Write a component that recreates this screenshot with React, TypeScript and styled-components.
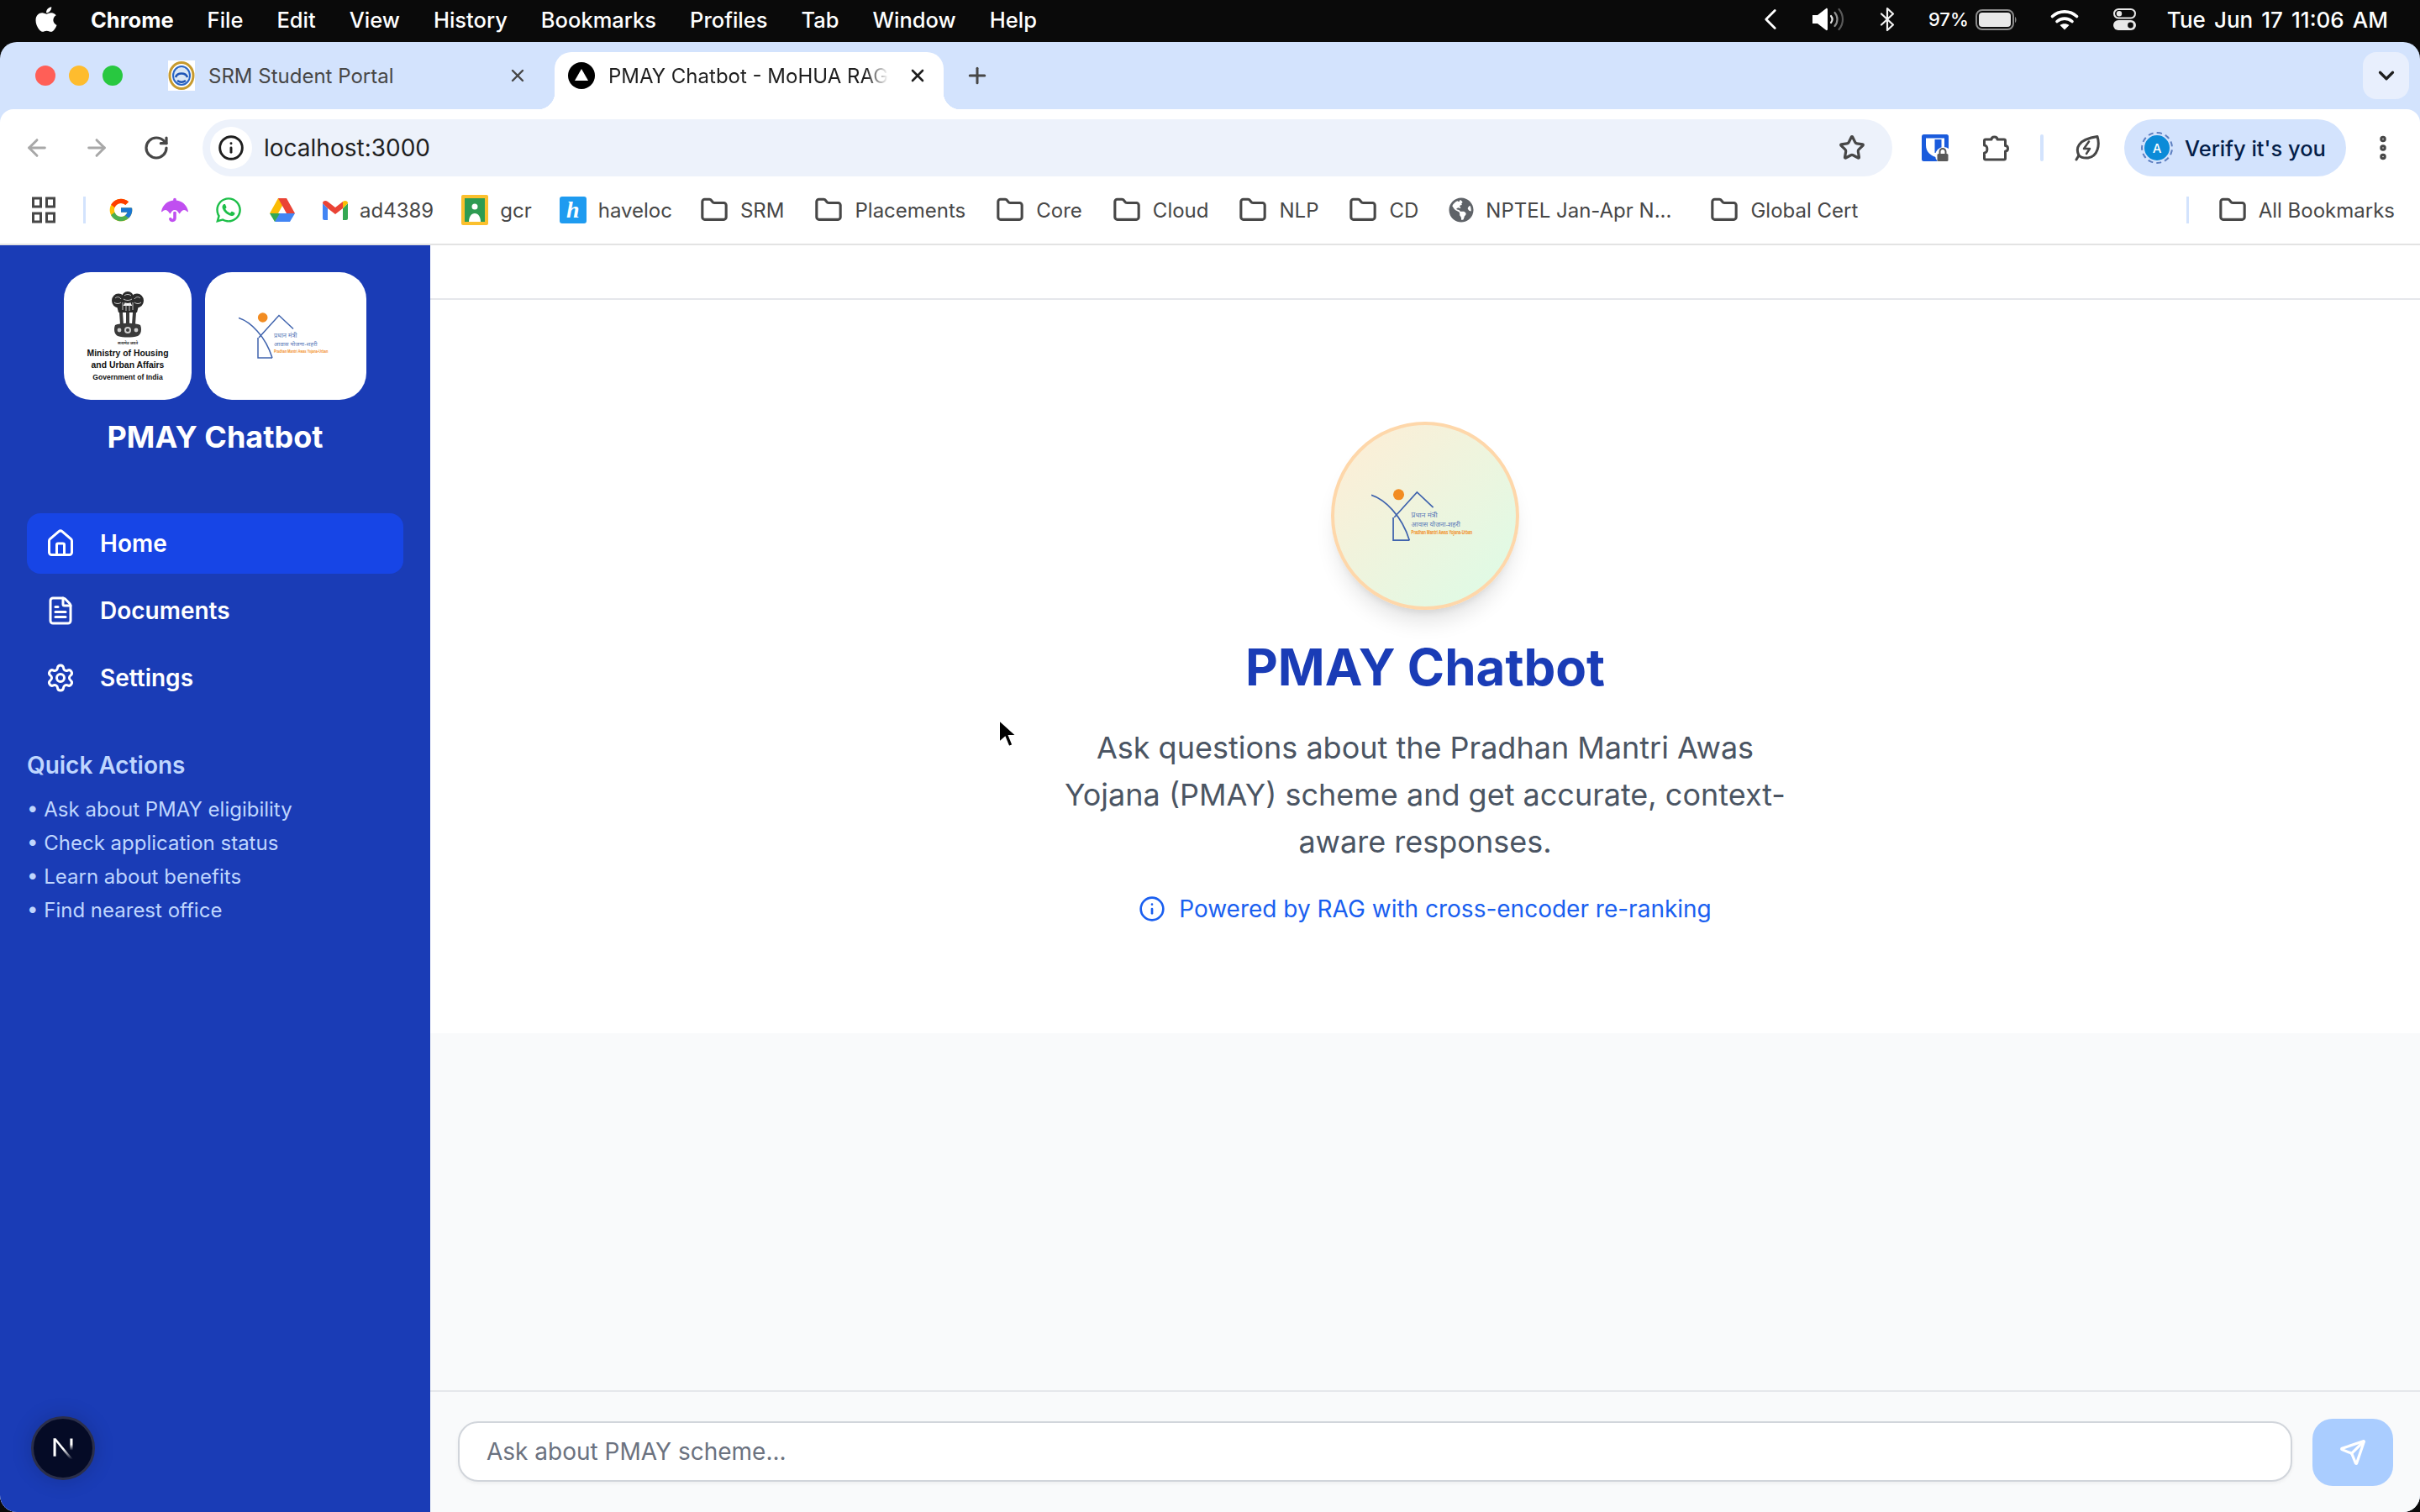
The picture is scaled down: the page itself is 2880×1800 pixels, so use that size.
import React from "react";
import styled, { createGlobalStyle } from "styled-components";
import {
  ArrowLeft,
  ArrowRight,
  ChevronDown,
  ChevronLeft,
  FileText,
  Folder,
  House,
  Info,
  MoreVertical,
  Plus,
  RotateCw,
  Send,
  Settings,
  Star,
  X,
} from "lucide-react";
import { FaApple, FaGlobeAmericas, FaUmbrella, FaWhatsapp } from "react-icons/fa";
import { FcGoogle } from "react-icons/fc";

const GlobalStyle = createGlobalStyle`
  html, body {
    margin: 0;
    padding: 0;
    overflow: hidden;
    background: #0a0a0a;
  }
  * {
    box-sizing: border-box;
  }
`;

const FONT = `Inter, "Noto Sans", "Liberation Sans", sans-serif`;

const Screen = styled.div`
  width: 2880px;
  height: 1800px;
  position: relative;
  display: flex;
  flex-direction: column;
  overflow: hidden;
  background: #0a0a0a;
  font-family: ${FONT};
`;

/* mac menu bar */
const MenuBar = styled.div`
  height: 50px;
  flex: none;
  display: flex;
  align-items: center;
  padding: 0 38px 4px 38px;
  color: #fff;
  font-size: 25.5px;
`;

const MenuItems = styled.div`
  display: flex;
  align-items: center;
  gap: 40px;
  margin-left: 36px;
`;

const MenuItem = styled.span<{ $bold?: boolean }>`
  font-weight: ${({ $bold }) => ($bold ? 700 : 500)};
`;

const StatusArea = styled.div`
  margin-left: auto;
  display: flex;
  align-items: center;
`;

const StatusSlot = styled.div<{ $w: number }>`
  width: ${({ $w }) => $w}px;
  display: flex;
  justify-content: center;
  align-items: center;
`;

const BatteryText = styled.span`
  font-size: 22px;
  font-weight: 500;
  margin-right: 8px;
`;

const Clock = styled.span`
  font-size: 26px;
  font-weight: 500;
  margin-left: 15px;
  word-spacing: 3.2px;
`;

/* browser window */
const BrowserWindow = styled.div`
  flex: 1;
  min-height: 0;
  display: flex;
  flex-direction: column;
  background: #d3e3fd;
  border-radius: 20px;
  overflow: hidden;
`;

const TabStrip = styled.div`
  height: 80px;
  flex: none;
  display: flex;
  align-items: flex-end;
  padding: 12px 13px 0 42px;
`;

const TrafficLights = styled.div`
  display: flex;
  gap: 16px;
  align-self: center;
  width: 142px;
  transform: translateY(-6px);
`;

const Light = styled.span<{ $color: string }>`
  width: 24px;
  height: 24px;
  border-radius: 50%;
  background: ${({ $color }) => $color};
`;

const Tab = styled.div<{ $active?: boolean }>`
  position: relative;
  width: ${({ $active }) => ($active ? "463px" : "476px")};
  height: 68px;
  display: flex;
  align-items: center;
  padding: 0 ${({ $active }) => ($active ? "19px" : "32px")} 12px 16px;
  gap: 16px;
  border-radius: 20px 20px 0 0;
  background: ${({ $active }) => ($active ? "#fff" : "transparent")};
  color: ${({ $active }) => ($active ? "#1f1f1f" : "#474747")};
  font-size: 24px;

  ${({ $active }) =>
    $active &&
    `
    &::before, &::after {
      content: "";
      position: absolute;
      bottom: 0;
      width: 20px;
      height: 20px;
    }
    &::before {
      left: -20px;
      background: radial-gradient(circle at 0 0, transparent 20px, #fff 20.5px);
    }
    &::after {
      right: -20px;
      background: radial-gradient(circle at 100% 0, transparent 20px, #fff 20.5px);
    }
  `}
`;

const TabTitle = styled.span<{ $fade?: boolean }>`
  flex: 1;
  white-space: nowrap;
  ${({ $fade }) =>
    $fade &&
    `-webkit-mask-image: linear-gradient(90deg, #000 90%, transparent 98%);
     mask-image: linear-gradient(90deg, #000 90%, transparent 98%);`}
`;

const NewTabButton = styled.div`
  width: 40px;
  height: 56px;
  margin-left: 20px;
  margin-bottom: 12px;
  display: flex;
  align-items: center;
  justify-content: center;
  color: #474747;
`;

const TabListButton = styled.div`
  margin-left: auto;
  width: 55px;
  height: 56px;
  margin-bottom: 12px;
  border-radius: 16px;
  background: #e8effd;
  display: flex;
  align-items: center;
  justify-content: center;
  color: #1f1f1f;
`;

const Toolbar = styled.div`
  height: 80px;
  flex: none;
  background: #fff;
  border-radius: 16px 16px 0 0;
  display: flex;
  align-items: center;
  padding: 12px 26px 0 28px;
`;

const NavIcons = styled.div`
  width: 213px;
  display: flex;
  align-items: center;
  gap: 39px;
`;

const Omnibox = styled.div`
  flex: 1;
  height: 68px;
  border-radius: 34px;
  background: #edf2fb;
  display: flex;
  align-items: center;
  padding: 0 32px 0 9px;
  color: #1f1f1f;
  font-size: 28px;
`;

const SiteInfo = styled.div`
  width: 50px;
  height: 50px;
  border-radius: 50%;
  background: #fff;
  display: flex;
  align-items: center;
  justify-content: center;
  margin-right: 14px;
  color: #1f1f1f;
`;

const OmniSpacer = styled.div`
  flex: 1;
`;

const ToolIcons = styled.div`
  display: flex;
  align-items: center;
  margin-left: 35px;
  gap: 40px;
  color: #474747;
`;

const ToolbarSeparator = styled.div`
  width: 4px;
  height: 32px;
  border-radius: 2px;
  background: #d3e3fd;
  margin: 0 -3px 0 -3px;
`;

const VerifyChip = styled.div`
  width: 264px;
  height: 68px;
  margin-left: 29px;
  border-radius: 34px;
  background: #d3e3fd;
  display: flex;
  align-items: center;
  padding-left: 20px;
  gap: 14px;
  color: #041e49;
  font-size: 25.5px;
  font-weight: 500;
`;

const Avatar = styled.div`
  width: 38px;
  height: 38px;
  border-radius: 50%;
  border: 2px dashed #5d7fc0;
  display: flex;
  align-items: center;
  justify-content: center;
  flex: none;
`;

const AvatarInner = styled.div`
  width: 30px;
  height: 30px;
  border-radius: 50%;
  background: #0b8bd8;
  color: #fff;
  font-size: 15px;
  display: flex;
  align-items: center;
  justify-content: center;
`;

const KebabSlot = styled.div`
  margin-left: 26px;
  color: #474747;
  display: flex;
`;

const BookmarksBar = styled.div`
  height: 82px;
  flex: none;
  background: #fff;
  border-bottom: 2px solid #e3e3e3;
  display: flex;
  align-items: center;
  padding: 0 30px 0 38px;
  gap: 33px;
  color: #474747;
  font-size: 24px;
`;

const BookmarkSeparator = styled.div<{ $push?: boolean }>`
  width: 3px;
  height: 32px;
  background: #d3e3fd;
  margin-left: ${({ $push }) => ($push ? "auto" : "0")};
  margin-right: ${({ $push }) => ($push ? "2px" : "-7px")};
`;

const Bookmark = styled.div<{ $offset?: number }>`
  display: flex;
  align-items: center;
  gap: 14px;
  white-space: nowrap;
  margin-left: ${({ $offset }) => $offset ?? 0}px;
`;

const IconRow = styled.div`
  display: flex;
  align-items: center;
  gap: 32px;
`;

const FolderGroup = styled.div`
  display: flex;
  align-items: center;
  gap: 36px;
`;

const IconCell = styled.div`
  width: 32px;
  height: 32px;
  display: flex;
  align-items: center;
  justify-content: center;
`;

const HavelocIcon = styled.div`
  width: 32px;
  height: 32px;
  border-radius: 3px;
  background: #1e9bf0;
  color: #fff;
  font-family: "Liberation Serif", serif;
  font-style: italic;
  font-weight: 700;
  font-size: 28px;
  line-height: 32px;
  text-align: center;
`;

const BookmarkFolder = styled(Folder)`
  width: 34px;
  height: 34px;
  flex: none;
  color: #474747;
`;

/* the app itself */
const AppLayout = styled.div`
  flex: 1;
  min-height: 0;
  display: flex;
  background: #f9fafb;
`;

const Sidebar = styled.aside`
  width: 512px;
  flex: none;
  background: #1a3cb6;
  display: flex;
  flex-direction: column;
  padding: 32px 32px 0;
  color: #fff;
  position: relative;
`;

const LogoRow = styled.div`
  display: flex;
  justify-content: center;
  gap: 16px;
  margin: 0 -8px;
`;

const LogoCard = styled.div<{ $wide?: boolean }>`
  width: ${({ $wide }) => ($wide ? "192px" : "152px")};
  height: 152px;
  border-radius: 32px;
  background: #fff;
  display: flex;
  flex-direction: column;
  align-items: center;
  justify-content: center;
  color: #111;
`;

const MinistryLine = styled.div<{ $small?: boolean }>`
  font-family: "Liberation Sans", Arial, sans-serif;
  font-weight: 700;
  font-size: ${({ $small }) => ($small ? "8.6px" : "10.4px")};
  line-height: ${({ $small }) => ($small ? "15px" : "14px")};
  white-space: nowrap;
`;

const SidebarTitle = styled.h1`
  margin: 22px 0 0;
  text-align: center;
  font-size: 36px;
  line-height: 44px;
  font-weight: 700;
`;

const Nav = styled.nav`
  margin-top: 69px;
  display: flex;
  flex-direction: column;
  gap: 8px;
`;

const NavItem = styled.div<{ $active?: boolean }>`
  height: 72px;
  border-radius: 16px;
  display: flex;
  align-items: center;
  gap: 29px;
  padding-left: 22px;
  font-size: 28px;
  font-weight: 600;
  background: ${({ $active }) => ($active ? "#1745e6" : "transparent")};
`;

const QuickActions = styled.section`
  margin-top: 50px;
  color: #bfd6fe;
`;

const QuickTitle = styled.h3`
  margin: 0 0 15px;
  font-size: 28px;
  line-height: 36px;
  font-weight: 600;
`;

const QuickItem = styled.div`
  font-size: 24px;
  line-height: 40px;
`;

const NextBadge = styled.div`
  position: absolute;
  left: 37px;
  bottom: 38px;
  width: 76px;
  height: 76px;
  border-radius: 50%;
  background: #050b26;
  border: 3px solid #2b2f4a;
  box-shadow: 0 0 24px rgba(0, 0, 0, 0.18);
  display: flex;
  align-items: center;
  justify-content: center;
`;

const Main = styled.main`
  flex: 1;
  min-width: 0;
  display: flex;
  flex-direction: column;
`;

const TopBar = styled.div`
  height: 65px;
  flex: none;
  background: #fff;
  border-bottom: 2px solid #e5e7eb;
`;

const Messages = styled.div`
  flex: 1;
  min-height: 0;
`;

const Hero = styled.section`
  height: 873px;
  background: #fff;
  padding-top: 145px;
  display: flex;
  flex-direction: column;
  align-items: center;
`;

const HeroCircle = styled.div`
  width: 224px;
  height: 224px;
  border-radius: 50%;
  border: 4px solid #fed7aa;
  background: linear-gradient(135deg, #ffedd5, #dcfce7);
  box-shadow: 0 20px 25px -5px rgba(0, 0, 0, 0.1), 0 8px 10px -6px rgba(0, 0, 0, 0.1);
  display: flex;
  align-items: center;
  justify-content: center;
`;

const HeroTitle = styled.h2`
  margin: 32px 0 0;
  font-size: 60px;
  line-height: 72px;
  font-weight: 700;
  color: #1a3cb6;
`;

const HeroText = styled.p`
  margin: 32px 0 0;
  width: 896px;
  text-align: center;
  font-size: 36px;
  line-height: 56px;
  color: #4b5563;
`;

const PoweredBy = styled.div`
  margin-top: 32px;
  display: flex;
  align-items: center;
  gap: 16px;
  font-size: 28px;
  line-height: 40px;
  color: #1a5ff0;
`;

const Composer = styled.div`
  height: 145px;
  flex: none;
  border-top: 2px solid #e5e7eb;
  padding: 32px 32px 0 33px;
  display: flex;
  align-items: flex-start;
  gap: 24px;
`;

const ComposerInput = styled.input`
  flex: 1;
  height: 72px;
  margin-top: 3px;
  border: 2px solid #d1d5db;
  border-radius: 24px;
  background: #fff;
  box-shadow: 0 2px 4px rgba(0, 0, 0, 0.05);
  padding: 0 32px;
  font-family: ${FONT};
  font-size: 28px;
  color: #111827;
  outline: none;

  &::placeholder {
    color: #6b7280;
    opacity: 1;
  }
`;

const SendButton = styled.button`
  width: 96px;
  height: 80px;
  flex: none;
  border: none;
  border-radius: 24px;
  background: #aacdff;
  color: #fff;
  display: flex;
  align-items: center;
  justify-content: center;
  padding: 0;
`;

const CursorMark = styled.svg`
  position: absolute;
  left: 1186px;
  top: 855px;
`;

const PmayLogo: React.FC<{ width: number }> = ({ width }) => (
  <svg width={width} height={(width * 56) / 113} viewBox="0 0 113 56">
    <circle cx="28.7" cy="6" r="5.8" fill="#f28c22" />
    <g fill="none" stroke="#3f63ad" strokeWidth="1.5">
      <path d="M0 6.5C14 11 32 28 40 54" />
      <path d="M24 30L48 3.5L65 19.5" />
      <path d="M23 30V54H40" />
    </g>
    <text x="42" y="30" fontSize="7.5" fill="#5a7ab8" fontFamily="'Noto Sans', 'DejaVu Sans', sans-serif">
      प्रधान मंत्री
    </text>
    <text x="42" y="39.5" fontSize="7" fill="#5a7ab8" fontFamily="'Noto Sans', 'DejaVu Sans', sans-serif">
      आवास योजना-शहरी
    </text>
    <g transform="translate(42 47.5) scale(0.66 1)">
      <text fontSize="5.800" fontWeight="700" fill="#f28c22" fontFamily="'Liberation Sans', sans-serif">
        Pradhan Mantri Awas Yojana-Urban
      </text>
    </g>
  </svg>
);

const StateEmblem: React.FC = () => (
  <svg width="40" height="70" viewBox="0 0 40 70">
    {/* lion heads */}
    <g fill="#2b2b2b">
      <circle cx="20" cy="10" r="7" />
      <ellipse cx="9" cy="14" rx="8" ry="8.500" />
      <ellipse cx="31" cy="14" rx="8" ry="8.500" />
      <path d="M7 20h26l-2 8h-22z" />
    </g>
    <g fill="none" stroke="#dcdcdc" strokeWidth="0.900">
      <path d="M16 8c2-2 6-2 8 0M15 12c3 2 7 2 10 0M5 11c2-2 5-2 7 1M4 16c2 2 6 2 8 0M28 12c2-3 5-3 7-1M28 16c2 2 6 2 8 0" />
      <path d="M14 16v9M18 17v9M22 17v9M26 16v9" />
    </g>
    {/* chest and abacus */}
    <g fill="#3a3a3a">
      <path d="M10 28h4l1 14h-4zM18 28h4v14h-4zM26 28h4l-1 14h-4z" />
      <path d="M5 43c6-3 24-3 30 0 2 5 1 11-3 13-7 2-17 2-24 0-4-2-5-8-3-13z" />
    </g>
    <g fill="#cfcfcf">
      <circle cx="20" cy="49" r="4" />
      <circle cx="10" cy="49" r="2.400" />
      <circle cx="30" cy="49" r="2.400" />
    </g>
    <circle cx="20" cy="49" r="2" fill="#3a3a3a" />
    <text x="20" y="66" fontSize="4.600" fontWeight="700" textAnchor="middle" fill="#333" fontFamily="'Noto Sans', 'DejaVu Sans', sans-serif">
      सत्यमेव जयते
    </text>
  </svg>
);

const GmailIcon: React.FC = () => (
  <svg width="30" height="26" viewBox="0 0 30 26">
    <path d="M0 5v18a2 2 0 0 0 2 2h4V11z" fill="#4285f4" />
    <path d="M30 5v18a2 2 0 0 1-2 2h-4V11z" fill="#34a853" />
    <path d="M0 5l6 6 9 7 9-7V3l-9 7L6 3C3.500 1 0 2 0 5z" fill="#ea4335" />
    <path d="M24 3v8l6-6c0-3-3.500-4-6-2z" fill="#fbbc04" />
  </svg>
);

const DriveIcon: React.FC = () => (
  <svg width="32" height="30" viewBox="0 0 32 30">
    <path d="M11 1h10l-5 9-5 9H1z" fill="#fbbc04" />
    <path d="M21 1l10 18H21L11 1z" fill="#ea4335" />
    <path d="M7 29h18l6-10H12z" fill="#4285f4" />
    <path d="M1 19l6 10 6-10z" fill="#34a853" />
  </svg>
);

const ClassroomIcon: React.FC = () => (
  <svg width="32" height="36" viewBox="0 0 32 36">
    <rect width="32" height="36" rx="2" fill="#fbc02d" />
    <rect x="4" y="4" width="24" height="28" fill="#2e9b52" />
    <circle cx="16" cy="14" r="3.500" fill="#fff" />
    <path d="M9 32c0-6 3-10 7-10s7 4 7 10z" fill="#fff" />
  </svg>
);

const AppsGrid: React.FC = () => (
  <svg width="28" height="32" viewBox="0 0 28 32" fill="none" stroke="#474747" strokeWidth="3">
    <rect x="1.500" y="2" width="9" height="10" />
    <rect x="17.500" y="2" width="9" height="10" />
    <rect x="1.500" y="20" width="9" height="10" />
    <rect x="17.500" y="20" width="9" height="10" />
  </svg>
);

const ShieldIcon: React.FC = () => (
  <svg width="32" height="32" viewBox="0 0 32 32">
    <rect width="32" height="32" rx="2.500" fill="#1a5bdc" />
    <path d="M5 4.500H27V28H20C11 26 5 21 5 13Z" fill="#fff" />
    <rect x="15.500" y="6" width="8" height="16" fill="#1a5bdc" />
    <circle cx="26" cy="25" r="10" fill="#fff" />
    <rect x="18.500" y="23" width="13" height="9" rx="1.500" fill="#595959" />
    <path d="M21.500 23v-2.500a3.500 3.500 0 0 1 7 0V23" fill="none" stroke="#595959" strokeWidth="2" />
  </svg>
);

const ExtensionIcon: React.FC = () => (
  <svg width="32" height="32" viewBox="0 0 32 32" fill="none" stroke="#474747" strokeWidth="3" strokeLinejoin="round">
    <path d="M4 6H11C11 2 18 2 18 6H26A1.500 1.500 0 0 1 27.500 7.500V13.500C31.500 13.500 31.500 20 27.500 20V28.500A1.500 1.500 0 0 1 26 30H4A1.500 1.500 0 0 1 2.500 28.500V22C7 22 7 13 2.500 13V7.500A1.500 1.500 0 0 1 4 6Z" />
  </svg>
);

const LeafBolt: React.FC = () => (
  <svg width="30" height="32" viewBox="0 0 30 32" fill="none" stroke="#474747" strokeWidth="3" strokeLinejoin="round" strokeLinecap="round">
    <path d="M5 25C1 17 3 6 27 2.500C30 12 28 26 16 28C11 28.500 7 27 5 25Z" />
    <path d="M5 25L2 30" />
    <path d="M17 8.500L11 17H18L14 23" strokeWidth="2.500" />
  </svg>
);

const VolumeIcon: React.FC = () => (
  <svg width="38" height="28" viewBox="0 0 38 28" fill="none" strokeLinecap="round">
    <path d="M0 9h6L16 1.200c1-.8 2 0 2 1v23.600c0 1-1 1.800-2 1L6 19H0z" fill="#fff" />
    <path d="M22 10c2 2.500 2 5.500 0 8" stroke="#e8e8e8" strokeWidth="2.200" />
    <path d="M26.500 6c4 4.500 4 11.500 0 16" stroke="#8e8e8e" strokeWidth="2.200" />
    <path d="M31.500 2c6 7 6 17 0 24" stroke="#5a5a5a" strokeWidth="2.200" />
  </svg>
);

const BluetoothIcon: React.FC = () => (
  <svg width="18" height="30" viewBox="0 0 18 30" fill="none" stroke="#f2f2f2" strokeWidth="2.200" strokeLinejoin="round" strokeLinecap="round">
    <path d="M2 8.500L16 21.500L9 28V2L16 8.500L2 21.500" />
  </svg>
);

const WifiIcon: React.FC = () => (
  <svg width="34" height="25" viewBox="0 0 34 25" fill="none" stroke="#fff" strokeWidth="3.600" strokeLinecap="round">
    <path d="M2.500 8.500C10.500 1 23.500 1 31.500 8.500" />
    <path d="M8 14.500C13 10 21 10 26 14.500" />
    <path d="M17 24.500L11.500 19C14.500 16.500 19.500 16.500 22.500 19Z" fill="#fff" stroke="none" />
  </svg>
);

const BatteryIcon: React.FC = () => (
  <svg width="50" height="25" viewBox="0 0 50 25">
    <rect x="1" y="1" width="44" height="23" rx="7" fill="none" stroke="#8a8a8a" strokeWidth="2" />
    <rect x="4" y="4" width="38" height="17" rx="4" fill="#e8e8e8" />
    <path d="M47 9c2 1 2 6 0 7z" fill="#8a8a8a" />
  </svg>
);

const ControlCenter: React.FC = () => (
  <svg width="27" height="26" viewBox="0 0 27 26">
    <rect x="1" y="1" width="25" height="10.500" rx="5.200" fill="none" stroke="#e8e8e8" strokeWidth="2" />
    <circle cx="7" cy="6.200" r="3.200" fill="#e8e8e8" />
    <rect y="14" width="27" height="12" rx="6" fill="#e8e8e8" />
    <circle cx="20.500" cy="20" r="3.400" fill="#0a0a0a" />
  </svg>
);

const SrmFavicon: React.FC = () => (
  <svg width="32" height="36" viewBox="0 0 32 36">
    <rect width="32" height="36" fill="#fff" />
    <ellipse cx="16" cy="18" rx="14" ry="15.500" fill="none" stroke="#c79a2e" strokeWidth="3" />
    <ellipse cx="16" cy="18" rx="10" ry="11" fill="#dbe7f5" stroke="#2a66c6" strokeWidth="2" />
    <path d="M9 20c2-6 12-6 14 0M11 24c3 2 7 2 10 0" fill="none" stroke="#1f55b5" strokeWidth="2.500" />
  </svg>
);

const NextFavicon: React.FC = () => (
  <svg width="32" height="32" viewBox="0 0 32 32">
    <circle cx="16" cy="16" r="16" fill="#000" />
    <path d="M16 8l8 14H8z" fill="#fff" />
  </svg>
);

const menuNames = ["File", "Edit", "View", "History", "Bookmarks", "Profiles", "Tab", "Window", "Help"];
const folderNames = ["SRM", "Placements", "Core", "Cloud", "NLP", "CD"];
const quickActions = [
  "Ask about PMAY eligibility",
  "Check application status",
  "Learn about benefits",
  "Find nearest office",
];

export default function App() {
  return (
    <Screen>
      <GlobalStyle />
      <MenuBar>
        <FaApple size={34} />
        <MenuItems>
          <MenuItem $bold>Chrome</MenuItem>
          {menuNames.map((name) => (
            <MenuItem key={name}>{name}</MenuItem>
          ))}
        </MenuItems>
        <StatusArea>
          <StatusSlot $w={58}>
            <ChevronLeft size={42} strokeWidth={1.6} />
          </StatusSlot>
          <StatusSlot $w={80}>
            <VolumeIcon />
          </StatusSlot>
          <StatusSlot $w={60}>
            <BluetoothIcon />
          </StatusSlot>
          <StatusSlot $w={144}>
            <BatteryText>97%</BatteryText>
            <BatteryIcon />
          </StatusSlot>
          <StatusSlot $w={74}>
            <WifiIcon />
          </StatusSlot>
          <StatusSlot $w={70}>
            <ControlCenter />
          </StatusSlot>
          <Clock>Tue Jun 17 11:06 AM</Clock>
        </StatusArea>
      </MenuBar>

      <BrowserWindow>
        <TabStrip>
          <TrafficLights>
            <Light $color="#ff5f57" />
            <Light $color="#febc2e" />
            <Light $color="#28c840" />
          </TrafficLights>
          <Tab>
            <SrmFavicon />
            <TabTitle>SRM Student Portal</TabTitle>
            <X size={24} strokeWidth={2.4} />
          </Tab>
          <Tab $active>
            <NextFavicon />
            <TabTitle $fade>PMAY Chatbot - MoHUA RAG</TabTitle>
            <X size={24} strokeWidth={2.6} color="#1f1f1f" />
          </Tab>
          <NewTabButton>
            <Plus size={30} strokeWidth={2.4} />
          </NewTabButton>
          <TabListButton>
            <ChevronDown size={30} strokeWidth={2.6} />
          </TabListButton>
        </TabStrip>

        <Toolbar>
          <NavIcons>
            <ArrowLeft size={32} color="#a8a8a8" strokeWidth={2.2} />
            <ArrowRight size={32} color="#a8a8a8" strokeWidth={2.2} />
            <RotateCw size={32} color="#474747" strokeWidth={2.4} />
          </NavIcons>
          <Omnibox>
            <SiteInfo>
              <Info size={32} strokeWidth={2.2} />
            </SiteInfo>
            localhost:3000
            <OmniSpacer />
            <Star size={32} color="#474747" strokeWidth={2.4} />
          </Omnibox>
          <ToolIcons>
            <ShieldIcon />
            <ExtensionIcon />
            <ToolbarSeparator />
            <LeafBolt />
          </ToolIcons>
          <VerifyChip>
            <Avatar>
              <AvatarInner>A</AvatarInner>
            </Avatar>
            Verify it's you
          </VerifyChip>
          <KebabSlot>
            <MoreVertical size={36} strokeWidth={3} />
          </KebabSlot>
        </Toolbar>

        <BookmarksBar>
          <AppsGrid />
          <BookmarkSeparator />
          <IconRow>
            <IconCell>
              <FcGoogle size={34} />
            </IconCell>
            <IconCell>
              <FaUmbrella size={34} color="#c04ff0" />
            </IconCell>
            <IconCell>
              <FaWhatsapp size={34} color="#1fbf4a" />
            </IconCell>
            <IconCell>
              <DriveIcon />
            </IconCell>
            <Bookmark>
              <GmailIcon />
              ad4389
            </Bookmark>
          </IconRow>
          <Bookmark>
            <ClassroomIcon />
            gcr
          </Bookmark>
          <Bookmark>
            <HavelocIcon>h</HavelocIcon>
            haveloc
          </Bookmark>
          <FolderGroup>
            {folderNames.map((name) => (
              <Bookmark key={name}>
                <BookmarkFolder strokeWidth={2.2} />
                {name}
              </Bookmark>
            ))}
            <Bookmark>
              <FaGlobeAmericas size={30} color="#5f6368" />
              NPTEL Jan-Apr N...
            </Bookmark>
            <Bookmark $offset={10}>
              <BookmarkFolder strokeWidth={2.2} />
              Global Cert
            </Bookmark>
          </FolderGroup>
          <BookmarkSeparator $push />
          <Bookmark>
            <BookmarkFolder strokeWidth={2.2} />
            All Bookmarks
          </Bookmark>
        </BookmarksBar>

        <AppLayout>
          <Sidebar>
            <LogoRow>
              <LogoCard>
                <StateEmblem />
                <MinistryLine>Ministry of Housing</MinistryLine>
                <MinistryLine>and Urban Affairs</MinistryLine>
                <MinistryLine $small>Government of India</MinistryLine>
              </LogoCard>
              <LogoCard $wide>
                <PmayLogo width={113} />
              </LogoCard>
            </LogoRow>
            <SidebarTitle>PMAY Chatbot</SidebarTitle>
            <Nav>
              <NavItem $active>
                <House size={36} strokeWidth={2} />
                Home
              </NavItem>
              <NavItem>
                <FileText size={36} strokeWidth={2} />
                Documents
              </NavItem>
              <NavItem>
                <Settings size={36} strokeWidth={2} />
                Settings
              </NavItem>
            </Nav>
            <QuickActions>
              <QuickTitle>Quick Actions</QuickTitle>
              {quickActions.map((item) => (
                <QuickItem key={item}>• {item}</QuickItem>
              ))}
            </QuickActions>
            <NextBadge>
              <svg width="30" height="30" viewBox="0 0 34 34">
                <defs>
                  <linearGradient id="nextFadeDown" x1="0" y1="0" x2="0" y2="1">
                    <stop offset="0.5" stopColor="#fff" />
                    <stop offset="1" stopColor="#fff" stopOpacity="0" />
                  </linearGradient>
                </defs>
                <path d="M4 4h3.500v24H4z" fill="#fff" />
                <path d="M4 4h3.500l23 28h-4z" fill="url(#nextFadeDown)" />
                <path d="M26.500 4h3.500v16h-3.500z" fill="url(#nextFadeDown)" />
              </svg>
            </NextBadge>
          </Sidebar>

          <Main>
            <TopBar />
            <Messages>
              <Hero>
                <HeroCircle>
                  <PmayLogo width={128} />
                </HeroCircle>
                <HeroTitle>PMAY Chatbot</HeroTitle>
                <HeroText>
                  Ask questions about the Pradhan Mantri Awas Yojana (PMAY) scheme and get accurate, context-aware responses.
                </HeroText>
                <PoweredBy>
                  <Info size={32} strokeWidth={2} />
                  Powered by RAG with cross-encoder re-ranking
                </PoweredBy>
              </Hero>
            </Messages>
            <Composer>
              <ComposerInput placeholder="Ask about PMAY scheme..." readOnly />
              <SendButton>
                <Send size={32} strokeWidth={2.4} />
              </SendButton>
            </Composer>
          </Main>
        </AppLayout>
      </BrowserWindow>

      <CursorMark width="26" height="38" viewBox="0 0 26 38">
        <path d="M3 2v27l7-6 4.500 11 5-2-4.500-11h9z" fill="#000" stroke="#fff" strokeWidth="2" />
      </CursorMark>
    </Screen>
  );
}
